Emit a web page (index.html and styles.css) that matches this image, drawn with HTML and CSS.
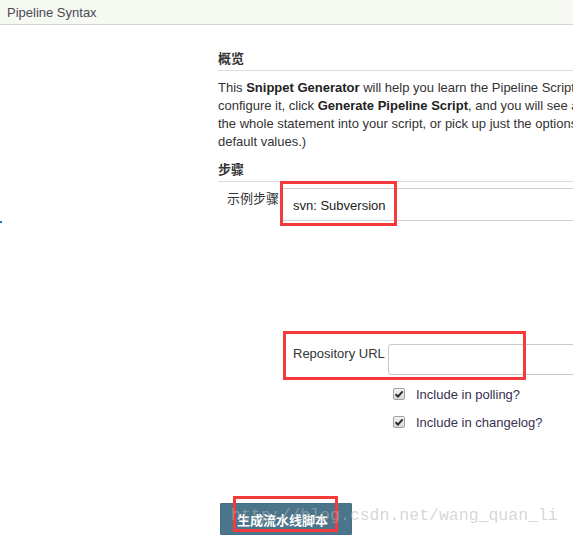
FILE: index.html
```html
<!DOCTYPE html>
<html>
<head>
<meta charset="utf-8">
<title>Pipeline Syntax</title>
<link rel="stylesheet" href="styles.css">
</head>
<body>
<div class="page">
  <header class="topbar">Pipeline Syntax</header>
  <div class="layout">
    <aside class="side"><span class="side-mark"></span></aside>
    <main class="main">
      <h2 class="section-title">概览</h2>
      <p class="intro">This <b>Snippet Generator</b> will help you learn the Pipeline Script code which can be used to define various steps. Pick a step you are interested in from the list,<br>configure it, click <b>Generate Pipeline Script</b>, and you will see a Pipeline Script statement that would call the step with that configuration. You may copy and paste<br>the whole statement into your script, or pick up just the options you care about. (Most parameters are optional and can be omitted in your script, leaving them at<br>default values.)</p>
      <h2 class="section-title second">步骤</h2>
      <div class="step-row">
        <div class="step-label">示例步骤</div>
        <div class="step-body">
          <div class="step-select">svn: Subversion</div>
          <div class="config">
            <div class="field-row">
              <label class="field-label">Repository URL</label>
              <div class="field-input"></div>
            </div>
            <div class="checks">
              <div class="check-row"><span class="check"><svg viewBox="0 0 12 12" width="12" height="12"><path d="M2.6 6.2 L5 8.6 L9.6 3.4" fill="none" stroke="#2b2b2b" stroke-width="2"/></svg></span><span class="check-text">Include in polling?</span></div>
              <div class="check-row"><span class="check"><svg viewBox="0 0 12 12" width="12" height="12"><path d="M2.6 6.2 L5 8.6 L9.6 3.4" fill="none" stroke="#2b2b2b" stroke-width="2"/></svg></span><span class="check-text">Include in changelog?</span></div>
            </div>
          </div>
        </div>
      </div>
      <div class="actions"><button class="gen-btn">生成流水线脚本</button></div>
    </main>
  </div>
  <div class="mark mark-step"></div>
  <div class="mark mark-url"></div>
  <div class="mark mark-btn"></div>
  <div class="watermark">http://blog.csdn.net/wang_quan_li</div>
</div>
</body>
</html>
```
FILE: styles.css
```css
html, body {
  margin: 0;
  padding: 0;
  background: #fff;
}
body {
  width: 573px;
  height: 537px;
  overflow: hidden;
  font-family: "Liberation Sans", Arial, "Noto Sans CJK SC", sans-serif;
  font-size: 13px;
  color: #333;
}
.page {
  position: relative;
  width: 573px;
  height: 537px;
  overflow: hidden;
}
.topbar {
  height: 24px;
  line-height: 25px;
  padding-left: 7px;
  background: #f6f8f2;
  border-bottom: 1px solid #d3d7cf;
  color: #4a4a55;
  font-size: 13px;
}
.layout {
  display: grid;
  grid-template-columns: 218px 700px;
}
.side {
  position: relative;
}
.side-mark {
  position: absolute;
  left: 0;
  top: 196px;
  width: 2px;
  height: 2px;
  background: #2f6fb8;
}
.main {
  padding-top: 25px;
}
.section-title {
  margin: 0;
  font-family: "Noto Sans CJK SC", "Liberation Sans", sans-serif;
  font-size: 13px;
  font-weight: bold;
  line-height: 16px;
  padding-bottom: 4px;
  border-bottom: 1px solid #dcdcdc;
  color: #333;
}
.section-title.second {
  margin-top: 10px;
}
.intro {
  margin: 8px 0 0;
  line-height: 18px;
  white-space: nowrap;
  color: #333;
}
.intro b {
  color: #222;
}
.step-row {
  display: flex;
}
.step-label {
  width: 56px;
  padding-left: 9px;
  padding-top: 8px;
  line-height: 16px;
  font-family: "Noto Sans CJK SC", "Liberation Sans", sans-serif;
  color: #333;
}
.step-body {
  flex: 1;
}
.step-select {
  margin-top: 6px;
  height: 31px;
  line-height: 33px;
  padding-left: 10px;
  border-top: 1px solid #d0d0d0;
  border-bottom: 1px solid #d0d0d0;
  color: #222;
}
.config {
  padding-top: 123px;
}
.field-row {
  display: flex;
  align-items: flex-start;
}
.field-label {
  width: 95px;
  padding-left: 10px;
  padding-top: 2px;
  line-height: 16px;
  color: #333;
}
.field-input {
  width: 400px;
  height: 29px;
  border: 1px solid #c8c8c8;
  border-radius: 3px;
  background: #fff;
}
.checks {
  padding-top: 5px;
}
.check-row {
  display: flex;
  align-items: center;
  height: 28px;
  padding-left: 110px;
}
.check {
  width: 10px;
  height: 10px;
  border: 1px solid #a0a0a0;
  border-radius: 2px;
  background: linear-gradient(#f2f2f2, #d8d8d8);
  display: flex;
  align-items: center;
  justify-content: center;
  overflow: hidden;
}
.check svg {
  display: block;
  flex: none;
}
.check-text {
  margin-left: 11px;
  color: #3a3050;
}
.actions {
  margin-top: 67px;
}
.gen-btn {
  display: block;
  margin-left: 2px;
  width: 132px;
  height: 32px;
  padding: 0 0 0 16px;
  text-align: left;
  border: 1px solid #46708a;
  border-radius: 1px;
  background: #4b758b;
  color: #fff;
  font-family: "Noto Sans CJK SC", sans-serif;
  font-size: 13px;
  font-weight: bold;
}
.mark {
  position: absolute;
  border: 3px solid #f43a3a;
  box-sizing: border-box;
}
.mark-step { left: 280px; top: 181px; width: 117px; height: 45px; }
.mark-url { left: 283px; top: 331px; width: 243px; height: 49px; }
.mark-btn { left: 233px; top: 496px; width: 105px; height: 36px; }
.watermark {
  position: absolute;
  left: 231px;
  top: 505px;
  font-family: "Liberation Mono", monospace;
  font-size: 16.5px;
  line-height: 22px;
  color: rgba(180, 180, 175, 0.55);
  white-space: nowrap;
  pointer-events: none;
}
```
